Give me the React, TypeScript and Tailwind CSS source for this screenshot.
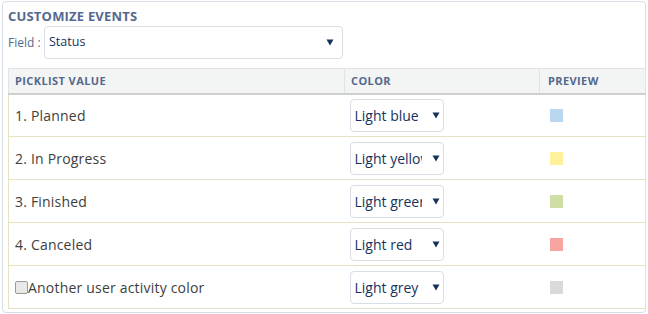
import React from "react";

const rows = [
  { label: "1. Planned", color: "Light blue", swatch: "#b9d7f0" },
  { label: "2. In Progress", color: "Light yellow", swatch: "#fff09b" },
  { label: "3. Finished", color: "Light green", swatch: "#cfdea5" },
  { label: "4. Canceled", color: "Light red", swatch: "#f8a5a2" },
  { label: "Another user activity color", color: "Light grey", swatch: "#dadada", checkbox: true },
];

function Arrow() {
  return (
    <svg width="8" height="7" viewBox="0 0 8 7" className="shrink-0">
      <path d="M0.5 0.5 H7.5 L4 6.5 Z" fill="#16325c" />
    </svg>
  );
}

export default function App() {
  return (
    <div
      className="w-[648px] h-[314px] bg-white overflow-hidden"
      style={{ fontFamily: '"Open Sans", "Liberation Sans", sans-serif' }}
    >
      <div className="ml-[2px] mt-[1px] w-[644px] h-[312px] border border-[#d8dde6] rounded-[4px] pl-[5px] pt-[5px]">
        <div className="text-[13px] font-bold text-[#54698d] leading-[18px] tracking-[0.2px]">CUSTOMIZE EVENTS</div>
        <div className="flex items-center mt-[1px]">
          <span className="text-[12px] text-[#54698d] w-[36px]">Field :</span>
          <div className="w-[299px] h-[33px] border border-[#d8dde6] rounded-[4px] flex items-center justify-between pl-[4px] pr-[8px]">
            <span className="text-[12.5px] text-[#16325c]">Status</span>
            <Arrow />
          </div>
        </div>
        <table className="mt-[9px] border-collapse w-[637px] table-fixed">
          <colgroup>
            <col className="w-[336px]" />
            <col className="w-[195px]" />
            <col className="w-[106px]" />
          </colgroup>
          <thead>
            <tr className="bg-[#f3f4f4] h-[25px] border border-[#e0e3e6] border-b-2 border-b-[#cfcfcf]">
              <th className="text-left pl-[6px] text-[11px] font-bold text-[#54698d] tracking-[0.4px]">PICKLIST VALUE</th>
              <th className="text-left pl-[6px] text-[11px] font-bold text-[#54698d] tracking-[0.4px] border-l border-[#e0e3e6]">COLOR</th>
              <th className="text-left pl-[8px] text-[11px] font-bold text-[#54698d] tracking-[0.4px] border-l border-[#e0e3e6]">PREVIEW</th>
            </tr>
          </thead>
          <tbody>
            {rows.map((r, i) => (
              <tr key={i} className="h-[43px] border border-[#e8e2c4]">
                <td className="pl-[6px] text-[14px] text-[#3e3e3c] tracking-[0.2px]">
                  {r.checkbox ? (
                    <span className="flex items-center">
                      <span className="inline-block w-[13px] h-[13px] border border-[#9a9a9a] rounded-[2px] bg-[#e9e9e9]" />
                      <span>{r.label}</span>
                    </span>
                  ) : (
                    r.label
                  )}
                </td>
                <td className="pl-[5px]">
                  <div className="w-[94px] h-[33px] border border-[#d8dde6] rounded-[4px] flex items-center pl-[4px]">
                    <span className="text-[14px] text-[#16325c] whitespace-nowrap overflow-hidden w-[67px] shrink-0">{r.color}</span>
                    <span className="ml-[10px]"><Arrow /></span>
                  </div>
                </td>
                <td className="pl-[10px]">
                  <div className="w-[13px] h-[13px]" style={{ backgroundColor: r.swatch }} />
                </td>
              </tr>
            ))}
          </tbody>
        </table>
      </div>
    </div>
  );
}
